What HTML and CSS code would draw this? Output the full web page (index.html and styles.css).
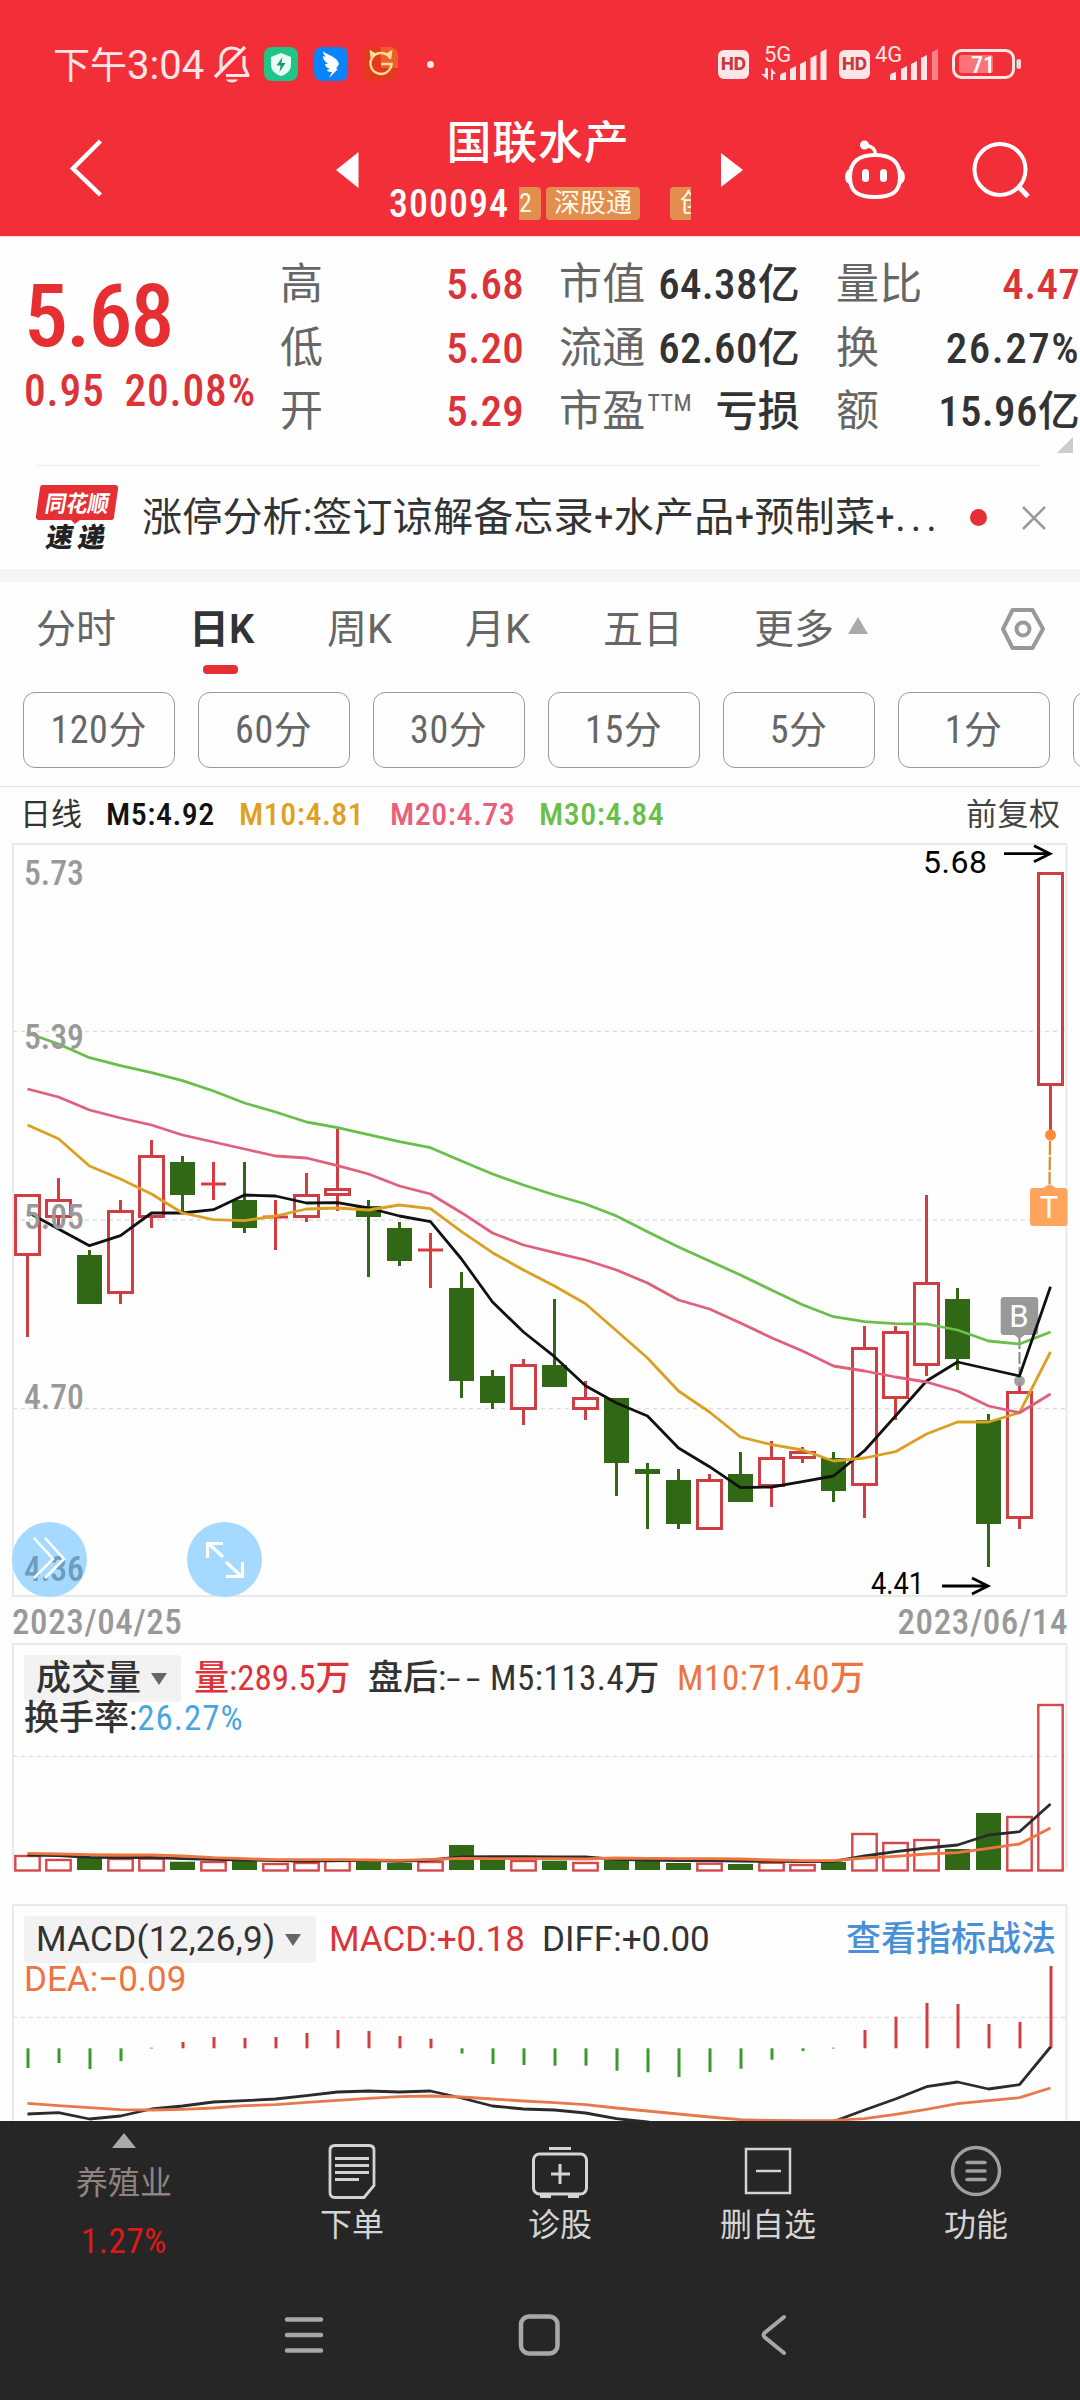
FILE: index.html
```html
<!DOCTYPE html>
<html lang="zh-CN">
<head>
<meta charset="utf-8">
<title>国联水产 300094</title>
<link rel="stylesheet" href="styles.css">
</head>
<body>
<div class="app">
  <header class="header">
    <div class="status">
      <span class="clock">下午<b>3:04</b></span>
      <svg class="st-bell" width="36" height="38" viewBox="0 0 36 38" fill="none" stroke="#ffe6e6" stroke-width="3.2"><path d="M7 26V14C7 7 12 3 18 3c3 0 5.500 1 7.500 2.500M30 11v11l4 8.500H12" stroke-linejoin="round"/><path d="M1 32L31 2"/><path d="M12 34.500h12c-1 2-3.500 3-6 3s-5-1-6-3z" fill="#ffe6e6" stroke="none"/></svg>
      <svg class="st-app" width="34" height="34" viewBox="0 0 34 34"><rect width="34" height="34" rx="8" fill="#1fc586"/><path d="M17 6l10 4v8c0 5-4 9-10 11C11 27 7 23 7 18v-8z" fill="#e9fff6"/><path d="M18.500 10l-6 8.500h4l-1 6.500 6-9h-4z" fill="#189b69"/></svg>
      <svg class="st-app" width="34" height="34" viewBox="0 0 34 34"><rect width="34" height="34" rx="8" fill="#0b84fb"/><path d="M9 4c3 4 14 5 16 13l-3 5h2l-9 9 3-6c-2 0-4 0-5-2l3-1c-3-1-5-3-5-5l3 0C11 14 9 13 9 9l3 1C10 8 9 6 9 4z" fill="#fff"/></svg>
      <svg class="st-app" width="34" height="34" viewBox="0 0 34 34"><rect width="34" height="34" rx="8" fill="#e33a1e"/><path d="M17 0h9a8 8 0 0 1 8 8v13H17z" fill="#ef5f29"/><path d="M26 11a10.500 10.500 0 1 0 1.500 6H17M8 12L7 5l5 3M26 12l1-7-5 3" fill="none" stroke="#ffdf9a" stroke-width="2.400"/></svg>
      <i class="st-dot"></i>
      <span class="hd hd-a">HD</span>
      <svg class="sig-a" width="66" height="36" viewBox="763 46 66 36" fill="#ffe6e6"><text class="net" x="764" y="62">5G</text><path d="M768 80l-7-6h4v-6h3zM771 80V68l5 6h-3v6z"/><path d="M780 76q0-3 6-4v8h-6zM790 69l6-3v14h-6zM800 64l6-3v19h-6zM810.500 58l6-3v25h-6zM820.500 52l6-3v31h-6z"/></svg>
      <span class="hd hd-b">HD</span>
      <svg class="sig-b" width="64" height="36" viewBox="875 46 64 36" fill="#ffe6e6"><text class="net" x="875" y="62">4G</text><path d="M890 76q0-3 6-4v8h-6zM901 69l6-3v14h-6zM911 64l6-3v19h-6zM921 58l6-3v25h-6z"/><path d="M932 52l6-3v31h-6z" opacity=".45"/></svg>
      <svg class="batt" width="70" height="32" viewBox="951 48 70 32"><rect x="953.500" y="50.500" width="60" height="27" rx="8" fill="none" stroke="#ffe6e6" stroke-width="3"/><rect x="959" y="55" width="34" height="18" rx="3" fill="#ff8489" opacity=".8"/><rect x="1016.500" y="59" width="4.500" height="10" rx="2" fill="#ffd6d6"/><text class="batt-t" x="971" y="73">71</text></svg>
    </div>
    <div class="nav">
      <svg class="nav-back" width="36" height="60" viewBox="0 0 36 60"><path d="M32.500 3L5 30.500 32.500 57" fill="none" stroke="#fff" stroke-width="4.500"/></svg>
      <svg class="nav-prev" width="23" height="36" viewBox="0 0 23 36"><path d="M22.500 0v36L0 18z" fill="#fff"/></svg>
      <div class="title">
        <h1>国联水产</h1>
        <div class="code"><span class="code-n">300094</span><span class="tag tag-l">2</span><span class="tag tag-m">深股通</span><span class="tag tag-r">创</span></div>
      </div>
      <svg class="nav-next" width="23" height="34" viewBox="0 0 23 34"><path d="M0 0v34l22-17z" fill="#fff"/></svg>
      <svg class="nav-bot" width="66" height="62" viewBox="842 138 66 62" fill="none" stroke="#fff" stroke-width="4"><path d="M875 154c17 0 25 7 25 22s-8 20-25 20-25-5-25-20 8-22 25-22z"/><path d="M875 154c1-6-3-9-10-9.500" stroke-width="3.500"/><circle cx="864.500" cy="144" r="4.500" fill="#fff" stroke="none"/><path d="M850 168c-6 1-7 14 0 15zM900 168c6 1 7 14 0 15z" fill="#fff" stroke="none"/><path d="M865.500 171.500v6M883.500 171.500v6" stroke-width="7" stroke-linecap="round"/></svg>
      <svg class="nav-search" width="58" height="58" viewBox="971 140 58 58" fill="none" stroke="#fff" stroke-width="4"><circle cx="999" cy="168.500" r="25.500"/><path d="M1017 185l10 10.500" stroke-width="5"/></svg>
    </div>
  </header>

  <section class="quote">
    <div class="price">
      <div class="price-big">5.68</div>
      <div class="price-sub"><span>0.95</span><span>20.08%</span></div>
    </div>
    <dl class="col col-1"><dt>高</dt><dd class="up">5.68</dd><dt>低</dt><dd class="up">5.20</dd><dt>开</dt><dd class="up">5.29</dd></dl>
    <dl class="col col-2"><dt>市值</dt><dd>64.38<em>亿</em></dd><dt>流通</dt><dd>62.60<em>亿</em></dd><dt>市盈<sup>TTM</sup></dt><dd><em>亏损</em></dd></dl>
    <dl class="col col-3"><dt>量比</dt><dd class="up">4.47</dd><dt>换</dt><dd class="pct">26.27%</dd><dt>额</dt><dd>15.96<em>亿</em></dd></dl>
    <i class="corner"></i>
  </section>

  <section class="news">
    <svg class="news-logo" width="82" height="66" viewBox="36 484 82 66"><path d="M42 484h73a3 3 0 0 1 3 4l-4 28a3 3 0 0 1-3 3H80l-5 4-4-4H39a3 3 0 0 1-3-4l4-28a3 3 0 0 1 2-3z" fill="#e62f35"/><text class="logo-a" x="134" y="511" textLength="64" lengthAdjust="spacingAndGlyphs" transform="skewX(-10)">同花顺</text><text class="logo-b" x="141" y="546" textLength="59" transform="skewX(-10)">速递</text></svg>
    <p class="news-text">涨停分析:签订谅解备忘录+水产品+预制菜+<span>...</span></p>
    <i class="news-dot"></i>
    <svg width="24" height="24" viewBox="0 0 24 24"><path d="M1 1l22 22M23 1L1 23" stroke="#999" stroke-width="2.500"/></svg>
  </section>

  <nav class="tabs">
    <span>分时</span><span class="on">日K</span><span>周K</span><span>月K</span><span>五日</span><span>更多<i class="tri-up"></i></span>
    <svg width="46" height="44" viewBox="0 0 46 44" fill="none" stroke="#999" stroke-width="4"><path d="M12.500 3h20L43 22 32.500 41h-20L3 22z" stroke-linejoin="round"/><circle cx="23" cy="22" r="6.500"/></svg>
  </nav>
  <div class="periods"><span>120分</span><span>60分</span><span>30分</span><span>15分</span><span>5分</span><span>1分</span><span></span></div>

  <div class="legend"><span class="l-a">日线</span><span class="l-b">M5:4.92</span><span class="l-c">M10:4.81</span><span class="l-d">M20:4.73</span><span class="l-e">M30:4.84</span><span class="l-f">前复权</span></div>

  <svg class="kchart" id="kchart" width="1080" height="756" viewBox="0 843 1080 756"></svg>
  <div class="dates"><span>2023/04/25</span><span>2023/06/14</span></div>

  <section class="panel vol">
    <svg id="vol" width="1080" height="261" viewBox="0 1643 1080 261"></svg>
    <div class="ind">
      <div class="ind-row"><span class="chip chip-v">成交量<i></i></span><span class="v-a up">量:289.5万</span><span class="v-b">盘后:<b>--</b></span><span class="v-c">M5:113.4万</span><span class="v-d org">M10:71.40万</span></div>
      <div class="ind-sub">换手率:<span class="blue">26.27%</span></div>
    </div>
  </section>
  <section class="panel macd">
    <svg id="macd" width="1080" height="217" viewBox="0 1904 1080 217"></svg>
    <div class="ind">
      <div class="ind-row"><span class="chip chip-m">MACD(12,26,9)<i></i></span><span class="m-a up">MACD:+0.18</span><span class="m-b">DIFF:+0.00</span><span class="m-c">查看指标战法</span></div>
      <div class="ind-sub org">DEA:−0.09</div>
    </div>
  </section>

  <footer class="bottom">
    <div class="acts">
      <div class="act sector"><i class="tri-up"></i><span>养殖业</span><b>1.27%</b></div>
      <div class="act a1"><svg width="48" height="56" viewBox="328 2143 48 56" fill="none" stroke="#d4d4d4" stroke-width="2.800"><path d="M335 2145.500h34q5 0 5 5v35l-10 12h-29q-5 0-5-5v-42q0-5 5-5z"/><path d="M335 2158.500h34M335 2165.500h34M335 2172.500h34M335 2179.500h24"/></svg><span>下单</span></div>
      <div class="act a2"><svg width="58" height="56" viewBox="531 2143 58 56" fill="none" stroke="#d4d4d4" stroke-width="3"><rect x="533.500" y="2154" width="53" height="40" rx="6"/><path d="M549 2148.500h22M560 2164v20M551 2174h19M540 2196.500h11M568 2196.500h11"/></svg><span>诊股</span></div>
      <div class="act a3"><svg width="48" height="56" viewBox="744 2143 48 56" fill="none" stroke="#d4d4d4" stroke-width="2.500"><rect x="746" y="2149" width="44" height="44"/><path d="M756 2171h25"/></svg><span>删自选</span></div>
      <div class="act a4"><svg width="52" height="56" viewBox="950 2143 52 56" fill="none" stroke="#a0a0a0" stroke-width="3.500"><circle cx="976" cy="2171" r="23.500"/><path d="M967 2162.500h18M967 2171h18M967 2179.500h18" stroke-linecap="round"/></svg><span>功能</span></div>
    </div>
    <div class="sys">
      <svg width="40" height="44" viewBox="284 2313 40 44" stroke="#a8a8a8" stroke-width="4.500" stroke-linecap="round"><path d="M287 2319.500h34M287 2335h34M287 2350.500h34"/></svg>
      <svg width="44" height="44" viewBox="518 2313 44 44"><rect x="521" y="2316.500" width="36.500" height="37" rx="8" fill="none" stroke="#a8a8a8" stroke-width="4.500"/></svg>
      <svg width="30" height="44" viewBox="758 2313 30 44"><path d="M784 2317l-19 15.500q-3 2.500 0 5l19 15.500" fill="none" stroke="#a8a8a8" stroke-width="4" stroke-linecap="round"/></svg>
    </div>
  </footer>
</div>
<script src="chart.js"></script>
</body>
</html>
```
FILE: styles.css
```css
* { box-sizing: border-box; margin: 0; padding: 0; }
body { width: 1080px; background: #fefefe; color: #333; font-family: Roboto, "Noto Sans CJK SC", sans-serif; font-stretch: 87%; }
i, em, b { font-style: normal; font-weight: inherit; }
svg { display: block; flex: none; overflow: visible; }
.app { width: 1080px; height: 2400px; overflow: hidden; display: flex; flex-direction: column; }
.app > * { flex: none; }
.up { color: #dc3339; }
.org { color: #ee7440; }
.blue { color: #4aa6de; }

.header { height: 236px; background: #f22f38; color: #fff; }
.status { height: 128px; display: flex; align-items: center; padding-left: 53px; }
.clock { width: 161px; font-size: 37px; color: #ffe6e6; white-space: nowrap; margin-top: -3px; }
.clock b { font-size: 40px; font-stretch: 100%; }
.st-app { margin-right: 16px; }
.st-bell { margin-right: 14px; }
.st-dot { width: 7px; height: 7px; border-radius: 50%; background: #ffe6e6; margin: 0 284px 0 13px; }
.hd { width: 31px; height: 29px; border-radius: 6px; background: #ffe6e6; color: #c73a41; font: 800 17px/29px Inter, sans-serif; text-align: center; }
.sig-a { margin: 0 10px 0 14px; }
.sig-b { margin: 0 12px 0 5px; }
.net { font-size: 22px; font-stretch: 100%; }
.batt-t { font-size: 24px; font-weight: 500; fill: #fff; }
.nav { height: 108px; display: flex; align-items: center; }
.nav > svg { margin-top: -25px; }
.nav .nav-back { margin-left: 68px; margin-top: -28px; }
.nav-prev { margin-left: 232px; }
.title { width: 302px; align-self: flex-start; margin: -14px 30px 0; }
.title h1 { font-size: 45px; font-weight: 500; line-height: 60px; text-align: center; letter-spacing: .7px; padding-right: 4px; margin-bottom: 13px; }
.code { display: flex; height: 33px; line-height: 34px; }
.code-n { width: 130px; font-size: 38px; font-weight: 500; letter-spacing: 1px; }
.tag { background: #e28e4e; font-size: 26px; line-height: 33px; border-radius: 4px; text-align: center; color: #fff8e8; }
.tag-l { width: 22px; border-radius: 0 4px 4px 0; text-align: left; margin-right: 5px; }
.tag-m { width: 94px; margin-right: 30px; }
.tag-r { width: 21px; border-radius: 4px 0 0 4px; text-align: left; padding-left: 10px; overflow: hidden; }
.nav-bot { margin-left: 98px; }
.nav-search { margin-left: 64px; }

.quote { height: 229px; border-top: 1px solid #fbdcdd; display: flex; position: relative; }
.price { width: 256px; padding-left: 24px; color: #e52f33; }
.price-big { font-size: 88px; font-weight: 500; letter-spacing: -2px; line-height: 100px; margin-top: 29px; }
.price-sub { font-size: 43.500px; font-weight: 500; letter-spacing: .8px; line-height: 52px; color: #dc3339; display: flex; white-space: nowrap; }
.price-sub span:first-child { width: 101px; }
.col { display: grid; grid-template-columns: 80px 1fr; grid-auto-rows: 63.700px; line-height: 64px; font-size: 43px; padding-top: 15px; white-space: nowrap; font-weight: 500; letter-spacing: .3px; }
.col dt { color: #666; font-weight: 400; }
.col dd { text-align: right; }
.col em { font-weight: 500; font-size: 42px; }
.col sup { font-size: 24px; line-height: 20px; vertical-align: 15px; margin-left: 2px; }
.col .pct { letter-spacing: 1.500px; }
.col-1 { width: 244px; margin-left: 24px; }
.col-2 { width: 241px; margin-left: 35px; }
.col-3 { width: 244px; margin-left: 36px; }
.corner { position: absolute; right: 7px; bottom: 12px; border: 8.500px solid transparent; border-right-color: #ccc; border-bottom-color: #ccc; }

.news { height: 104px; margin: 0 39px 0 37px; border-top: 1px solid #ebebeb; display: flex; align-items: center; }
.news > * { flex: none; }
.news-logo { margin-left: -1px; }
.logo-a { font: 700 23px "Noto Sans CJK SC", sans-serif; fill: #fff; }
.logo-b { font: 900 27px "Noto Sans CJK SC", sans-serif; fill: #222; }
.news-text { width: 800px; margin: 0 28px 0 24px; font-size: 40px; letter-spacing: .2px; line-height: 60px; white-space: nowrap; }
.news-text span { letter-spacing: 5px; }
.news-dot { width: 17px; height: 17px; border-radius: 50%; background: #e62f35; margin-right: 35px; }

.tabs { height: 106px; border-top: 13px solid #f5f5f5; display: flex; align-items: center; padding-left: 36px; font-size: 40px; font-stretch: 100%; color: #666; }
.tabs span { width: 138px; display: flex; align-items: center; position: relative; top: -3px; }
.tabs span:nth-child(1) { width: 153px; }
.tabs span:nth-child(5) { width: 151px; }
.tabs span:nth-child(6) { width: 246px; }
.tabs .on { color: #333; font-weight: 600; }
.tabs .on::after { content: ""; position: absolute; left: 14px; bottom: -19px; width: 35px; height: 9px; border-radius: 4px; background: #e62f35; }
.tri-up { border: 10px solid transparent; border-bottom: 17px solid #aaa; border-top: 0; margin-left: 14px; }
.periods { height: 112px; border-bottom: 1.500px solid #e4e4e4; padding: 17px 0 0 23px; display: flex; gap: 23.500px; overflow: hidden; }
.periods span { flex: none; width: 151.500px; height: 76px; border: 1.500px solid #999; border-radius: 12px; font-size: 38px; letter-spacing: .6px; line-height: 75px; text-align: center; color: #666; }

.legend { height: 56px; display: flex; padding-left: 20px; font-size: 32px; font-weight: 500; letter-spacing: .5px; line-height: 55px; white-space: nowrap; }
.legend .l-a { width: 86px; font-size: 31px; font-weight: 400; letter-spacing: 0; }
.legend .l-b { width: 133px; color: #111; }
.legend .l-c { width: 151px; color: #e0a020; }
.legend .l-d { width: 149px; color: #e8607c; }
.legend .l-e { width: 427px; color: #6abf4b; }
.legend .l-f { font-size: 31px; font-weight: 400; color: #444; }

.dates { height: 44px; display: flex; justify-content: space-between; padding: 0 12px; font-size: 35px; font-weight: 500; letter-spacing: .6px; line-height: 48px; color: #999; }
.axis { font-size: 35px; fill: #999; font-weight: 500; }
.axis-cover { fill: #6c9cc0; }
.mark { font-size: 32px; fill: #000; font-stretch: 100%; }
.flag { font-size: 31px; fill: #fff; text-anchor: middle; font-stretch: 100%; }

.panel { display: grid; }
.panel > * { grid-area: 1 / 1; }
.ind { padding: 12px 0 0 24px; font-size: 35px; font-weight: 450; line-height: 48px; white-space: nowrap; }
.ind-row { display: flex; height: 47px; }
.ind-sub { line-height: 34px; }
.vol .blue { letter-spacing: 1px; }
.chip { background: #f2f2f2; border-radius: 4px; padding-left: 12px; display: flex; align-items: center; }
.chip i { border: 8.500px solid transparent; border-top: 12px solid #666; border-bottom: 0; margin-left: 10px; }
.chip-v { width: 157px; margin-right: 13px; }
.v-a { width: 174px; }
.v-b { width: 122px; }
.v-b b { display: inline-block; letter-spacing: 3px; transform: scaleX(1.700); transform-origin: left; }
.v-c { width: 187px; letter-spacing: .5px; }
.v-d { letter-spacing: .6px; }
.macd { font-stretch: 100%; }
.chip-m { width: 292px; margin-right: 13px; letter-spacing: .3px; }
.m-a { width: 213px; }
.m-b { width: 304px; }
.m-c { color: #4a90d9; }

.bottom { height: 279px; background: #262626; color: #d4d4d4; }
.acts { height: 172px; display: flex; padding-left: 24px; }
.act { width: 200px; display: flex; flex-direction: column; align-items: center; font-size: 32px; padding-top: 22px; }
.act span { line-height: 48px; margin-top: 2px; }
.sector { padding-top: 12px; color: #8f8480; }
.sector .tri-up { margin: 0; border-width: 0 12px 15px; border-color: transparent transparent #aaa; }
.sector span { margin-top: 11px; }
.sector b { color: #e01818; font-size: 35px; letter-spacing: .6px; line-height: 48px; margin-top: 11px; }
.a1 { margin-left: 28px; }
.a2 { margin-left: 8px; }
.a3 { margin-left: 8px; }
.a4 { margin-left: 8px; }
.sys { height: 84px; display: flex; align-items: center; padding-left: 284px; }
.sys svg + svg { margin-left: 194px; }
.sys svg:last-child { margin-left: 196px; }
```
FILE: chart.js
```js
const RED = '#cf3e42', GREEN = '#306815';
const X = i => 27.5 + 31 * i;
// [direction, high, body top, body bottom, low]; u = up, d = down, f = flat
const candles = [
  ['u',1194,1194,1256,1337],['u',1178,1199,1218,1226],['d',1250,1255,1304,1304],['u',1200,1210,1294,1304],
  ['u',1140,1155,1218,1228],['d',1156,1162,1195,1213],['f',1162,1184,1184,1200],['d',1162,1200,1228,1233],
  ['f',1200,1217,1217,1250],['u',1173,1194,1218,1222],['u',1129,1188,1196,1211],['d',1200,1206,1217,1277],
  ['d',1222,1228,1261,1266],['f',1233,1250,1250,1288],['d',1272,1288,1381,1398],['d',1370,1376,1403,1409],
  ['u',1359,1364,1410,1425],['d',1299,1365,1387,1387],['u',1381,1397,1410,1420],['d',1398,1398,1463,1496],
  ['d',1463,1469,1474,1529],['d',1469,1480,1524,1529],['u',1474,1479,1530,1530],['d',1452,1474,1502,1502],
  ['u',1441,1457,1487,1507],['u',1447,1451,1459,1463],['d',1452,1458,1491,1502],['u',1326,1347,1486,1518],
  ['u',1326,1331,1399,1420],['u',1195,1282,1366,1376],['d',1288,1299,1359,1370],['d',1414,1420,1524,1567],
  ['u',1381,1391,1519,1529],['u',872,872,1086,1135]
];
const ma = {
  '#6abf4b': [1033,1044,1057.7,1065.7,1072.7,1080.7,1091,1103,1112,1122,1127.7,1134.7,1141.7,1147.7,1161,1174,1185,1195,1204,1216,1231.7,1247,1261,1275,1290,1304.7,1316.7,1321.7,1323.7,1324,1330,1341,1344,1332],
  '#111': [1212,1229,1245.7,1235.7,1213,1213,1209.7,1195,1196,1203,1202.7,1208,1216,1221.7,1259,1302,1332,1356.7,1385.7,1403,1416,1448,1466.7,1487.7,1487,1481.7,1476,1450.7,1416,1381,1362,1369,1376,1286.7],
  '#dba021': [1125,1138.7,1166,1179,1194,1213,1219.7,1220.7,1216,1209,1208,1210,1205,1208.7,1231.7,1252.7,1270,1286,1303.7,1330.7,1358,1391,1412,1437,1444.7,1450,1461,1458,1451.7,1434,1422,1422,1412.7,1352],
  '#e0607c': [1089,1097,1110,1118,1125,1135,1142,1149,1156,1158,1165.7,1174,1186,1194,1212.7,1233,1245,1252.7,1260,1270,1283,1300,1309,1323,1337.7,1351,1366,1371,1377,1382,1391,1406,1412.7,1394]
};
const volTops = [1855,1859,1858,1858,1857.7,1861.7,1861,1860,1863,1862,1860,1860.7,1863,1861,1845,1860,1860,1860.7,1862,1860,1861,1863,1862.7,1864,1861.7,1864,1862,1833,1842,1839,1849,1813,1816,1704];
const volMa = {
  '#2b2b2b': [1855,1855.7,1857.3,1857.7,1857.5,1858.7,1859.3,1860,1860.7,1861,1860.7,1860.3,1861.3,1860,1857,1856.7,1856.7,1857,1857,1859.3,1860,1860.7,1860.7,1861,1861.3,1861.7,1861.3,1856,1851.7,1848,1845,1835,1831.7,1804],
  '#ee7440': [1853.3,1854,1854.7,1855,1855,1856,1857.7,1858.7,1859.7,1859.7,1859.7,1860,1860.3,1859.3,1858.3,1858.7,1858.7,1858.7,1859,1858,1858.3,1858.7,1858.7,1859,1860,1860.7,1860.7,1858,1856.3,1854,1852.7,1848.3,1844,1828]
};
const bars = [2068,2063,2069,2061,2048,2042,2037,2038,2037,2033,2030,2031,2036,2038.7,2053.5,2064,2065,2065.7,2065.7,2070.7,2072.3,2077,2072,2068.7,2059.7,2051,2048,2030,2016.7,2003,2004,2024,2022,1966];
const macdLines = {
  '#2b2b2b': [2114,2112.7,2119,2116,2109,2106,2102,2100.7,2099,2095.7,2092,2091,2092,2091,2098,2106,2109,2110,2113,2118.7,2122,2126,2128,2129,2129,2127,2121.5,2110,2099,2086.7,2082,2089,2084.7,2047],
  '#e67a4c': [2103.3,2105.7,2107.7,2109.7,2110,2109.3,2108,2105.7,2104.7,2102.3,2100.3,2098.3,2096.7,2096,2097,2099,2101,2102.7,2104.7,2108,2111,2114,2117,2119.7,2120.5,2120.7,2120.3,2118.7,2114.3,2109.3,2103.7,2100.7,2097.7,2088]
};
const line = (y, c, w) => `<polyline points="${y.map((v, i) => X(i) + ',' + v).join(' ')}" fill="none" stroke="${c}" stroke-width="${w}" stroke-linejoin="round"/>`;
const lines = (o, w) => Object.entries(o).map(([c, y]) => line(y, c, w)).join('');
const dash = y => `<path d="M13 ${y}H1066" stroke="#ddd" stroke-width="1.3" stroke-dasharray="4 4"/>`;
const rect = (x, y, w, h, a) => `<rect x="${x}" y="${y}" width="${w}" height="${h}" ${a}/>`;
const axis = (y, t, c = '') => `<text class="axis ${c}" x="24" y="${y}" textLength="60" lengthAdjust="spacingAndGlyphs">${t}</text>`;

function candle([k, hi, t, b, lo], i) {
  const x = X(i);
  if (k === 'd') return rect(x - 12.5, t, 25, b - t, `fill="${GREEN}"`) + `<path d="M${x} ${hi}V${lo}" stroke="${GREEN}" stroke-width="3"/>`;
  if (k === 'f') return `<path d="M${x} ${hi}V${lo}M${x - 12.5} ${t}h25" stroke="#d93a3e" stroke-width="3"/>`;
  return rect(x - 12, t + 1.5, 24, b - t - 3, `fill="none" stroke="${RED}" stroke-width="3"`) +
    `<path d="M${x} ${hi}V${t}M${x} ${b}V${lo}" stroke="${RED}" stroke-width="3"/>`;
}
const pill = (x, y, c) => rect(x, y, 37.5, 38, `rx="3" fill="${c}"`);
const arrow = (x, y) => `<path d="M${x} ${y}h45M${x + 30} ${y - 8}L${x + 46} ${y}l-16 8" fill="none" stroke="#000" stroke-width="2.8"/>`;

document.getElementById('kchart').innerHTML =
  rect(13, 844, 1053.5, 752, 'fill="none" stroke="#e9e9e9" stroke-width="2"') + dash(1031.5) + dash(1220) + dash(1408.5) +
  candles.map(candle).join('') +
  '<circle cx="1019.500" cy="1381" r="5.500" fill="#999" opacity=".9"/><path d="M1019.500 1337V1376" stroke="#888" stroke-width="2" stroke-dasharray="12 3"/>' +
  '<path d="M1012 1333l7.500 6 7.500-6z" fill="#999"/>' +
  '<circle cx="1050.500" cy="1135" r="5.500" fill="#ff8a3c"/><path d="M1050 1141L1049.500 1184" stroke="#e0872f" stroke-width="2.200" stroke-dasharray="14 1.500"/>' +
  pill(1000.7, 1297, '#999') + '<text class="flag" x="1019" y="1327">B</text>' +
  lines(ma, 2.8) +
  '<path d="M1041 1189l8.500-5 8.500 5z" fill="#ffa45c"/>' + pill(1030, 1188, '#ffa45c') + '<text class="flag" x="1049" y="1218">T</text>' +
  axis(885, '5.73') + axis(1049, '5.39') + axis(1229, '5.05') + axis(1409, '4.70') +
  '<text class="mark" x="923" y="873" textLength="64">5.68</text>' + arrow(1004, 853.7) +
  '<text class="mark" x="871" y="1594" textLength="53" lengthAdjust="spacingAndGlyphs">4.41</text>' + arrow(942, 1586) +
  '<g fill="#a5d9ff"><circle cx="49.500" cy="1559.500" r="37.500"/><circle cx="224.500" cy="1559.500" r="37.500"/></g>' +
  axis(1581, '4.36', 'axis-cover') +
  '<g fill="none" stroke="#fff" stroke-width="2.600"><path d="M34 1538l19 21-19 19M45 1538l19 21-19 19"/><path d="M223 1557l-15-14M207.500 1558v-14.500h15.500M226 1562l15 14M226 1576.500h16.500V1562" stroke-width="3.200"/></g>';

document.getElementById('vol').innerHTML =
  '<path d="M13 1869V1644H1066.500V1869" fill="none" stroke="#e9e9e9" stroke-width="2"/>' + dash(1756.3) +
  volTops.map((t, i) => candles[i][0] === 'd' ? rect(X(i) - 12.5, t, 25, 1870 - t, `fill="${GREEN}"`)
    : rect(X(i) - 12.2, t + 1, 24.4, 1869.5 - t, 'fill="none" stroke="#d4484c" stroke-width="2.4"')).join('') +
  lines(volMa, 2.8);

document.getElementById('macd').innerHTML =
  '<clipPath id="pane"><rect x="0" y="1904" width="1080" height="217"/></clipPath><g clip-path="url(#pane)">' +
  '<path d="M13 2121V1905H1066.500V2121" fill="none" stroke="#e9e9e9" stroke-width="2"/>' + dash(2017.3) +
  bars.map((y, i) => y === 2048 ? rect(X(i) - 1.5, 2047.5, 3, 1.3, 'fill="#aaa"')
    : `<path d="M${X(i) + .5} 2048.3V${y}" stroke="${y < 2048 ? '#cf3e42' : '#3b9a2c'}" stroke-width="3"/>`).join('') +
  lines(macdLines, 2.8) + '</g>';
```
